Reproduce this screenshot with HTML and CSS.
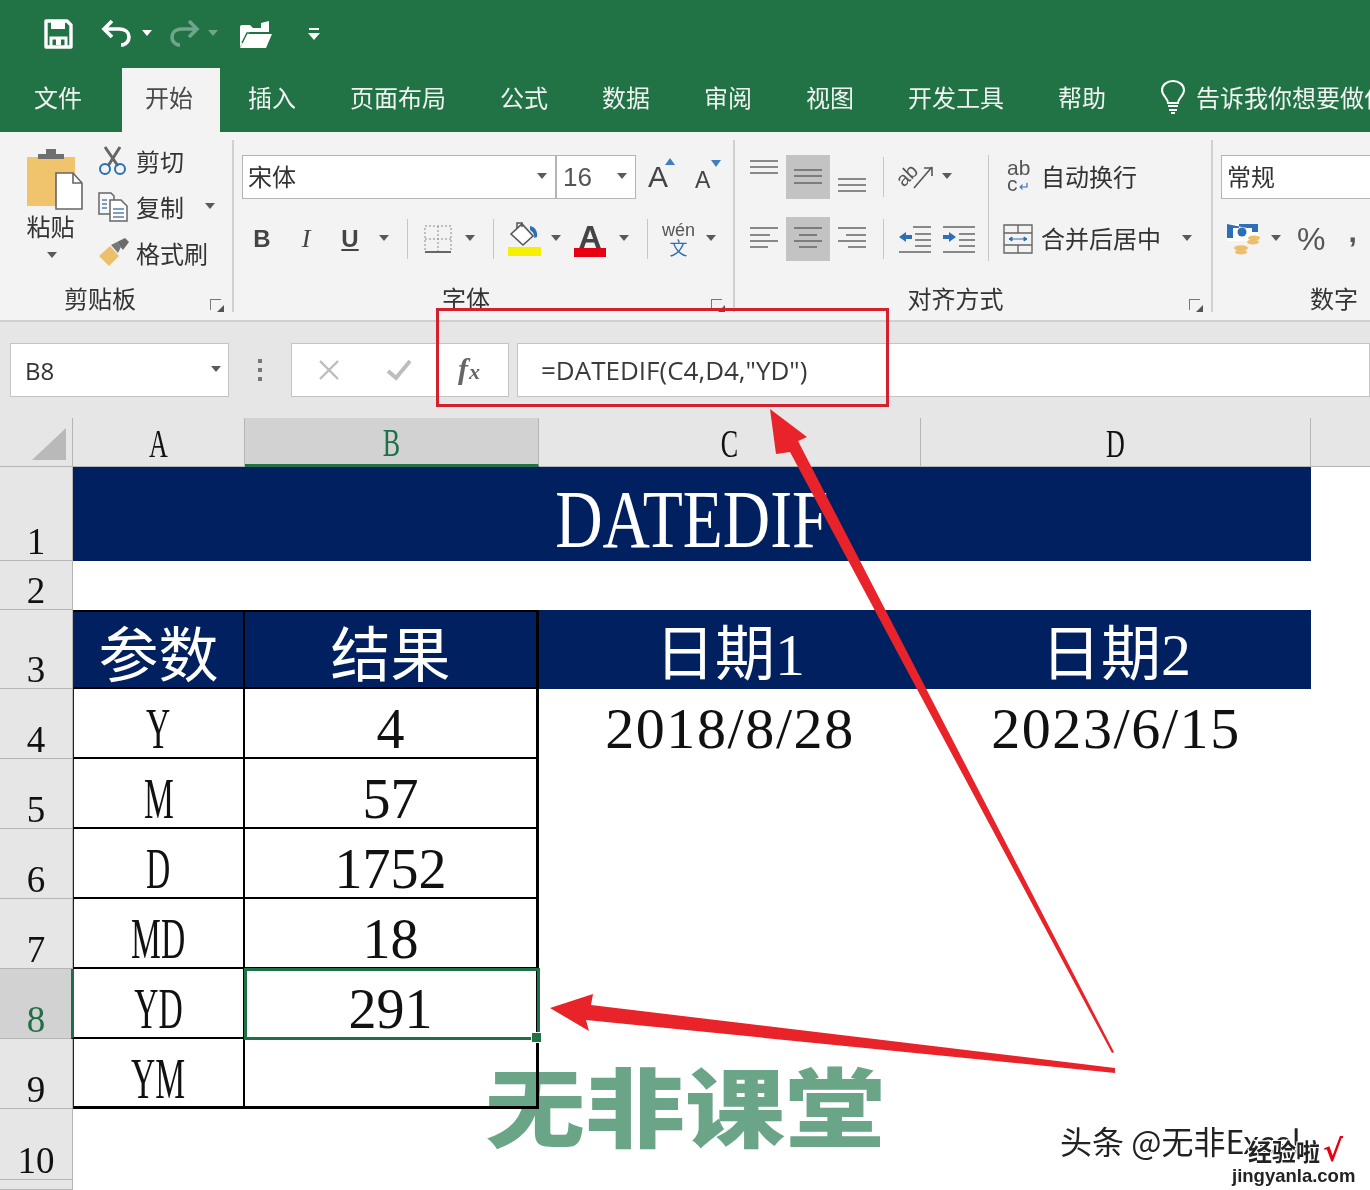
FILE: index.html
```html
<!DOCTYPE html>
<html lang="zh-CN">
<head>
    <meta charset="UTF-8">
    <title>DATEDIF - Excel</title>
    <link rel="stylesheet" href="styles.css">
</head>
<body>
    <div class="qat">
        <svg class="q-save" width="32" height="32" viewBox="0 0 32 32"><path d="M4 3h21l4 4v22H4z" fill="none" stroke="#fff" stroke-width="3.4" stroke-linejoin="round"/><path d="M9 4h14v7H9z" fill="#fff"/><path d="M9 29v-9h15v9" fill="none" stroke="#fff" stroke-width="3"/><path d="M14 21v6h5v-6z" fill="#fff"/></svg>
        <svg class="q-undo" width="32" height="30" viewBox="0 0 32 30"><path d="M11 2 3 10l8 8M4 10h14c7 0 10 4 10 8s-3 8-8 8" fill="none" stroke="#fff" stroke-width="3.6"/></svg>
        <span class="caret white"></span>
        <svg class="q-redo" width="32" height="30" viewBox="0 0 32 30"><path d="M21 2l8 8-8 8M28 10H14C7 10 4 14 4 18s3 8 8 8" fill="none" stroke="#6fa58a" stroke-width="3.6"/></svg>
        <span class="caret dim"></span>
        <svg class="q-open" width="34" height="30" viewBox="0 0 34 30"><path d="M1 28V8q0-2 2-2h8l3 3h8V4l8-2v11H11z" fill="#fff"/><path d="M1 29l7-14h25l-6 14z" fill="#fff"/><path d="M3 24l5-10h23" fill="none" stroke="#217346" stroke-width="1.5"/></svg>
        <svg class="q-more" width="12" height="14" viewBox="0 0 12 14"><path d="M1 1h10v2H1z" fill="#fff"/><path d="M0 6h12l-6 7z" fill="#fff"/></svg>
    </div>

    <div class="tabs">
        <div class="tab first">文件</div>
        <div class="tab active">开始</div>
        <div class="tab">插入</div>
        <div class="tab">页面布局</div>
        <div class="tab">公式</div>
        <div class="tab">数据</div>
        <div class="tab">审阅</div>
        <div class="tab">视图</div>
        <div class="tab">开发工具</div>
        <div class="tab">帮助</div>
        <div class="tell">
            <svg width="26" height="36" viewBox="0 0 26 36"><path d="M8 24c0-5-6-7-6-13C2 6 7 2 13 2s11 4 11 9c0 6-6 8-6 13z" fill="none" stroke="#fff" stroke-width="2"/><path d="M8 27h10M9 31h8M11 34h4" stroke="#fff" stroke-width="2"/></svg>
            <span>告诉我你想要做什么</span>
        </div>
    </div>

    <div class="ribbon">
        <section class="group g-clip">
            <div class="g-body clip-body">
                <div class="paste">
                    <svg width="60" height="62" viewBox="0 0 60 62"><path d="M1 9h48v49H1z" fill="#f0c36d"/><path d="M12 11V6h8V1h10v5h8v5z" fill="#6f6f6f"/><path d="M30 25h17l9 10v26H30z" fill="#fff" stroke="#666" stroke-width="1.6"/><path d="M47 25v10h9" fill="none" stroke="#666" stroke-width="1.6"/></svg>
                    <span class="paste-text">粘贴</span>
                    <span class="caret"></span>
                </div>
                <div class="clip-list">
                    <div class="clip-item">
                        <svg width="30" height="30" viewBox="0 0 30 30"><path d="M7 1l13 19M22 1L10 20" stroke="#666" stroke-width="3"/><circle cx="7" cy="23" r="5" fill="none" stroke="#2b6fb3" stroke-width="2"/><circle cx="22" cy="23" r="5" fill="none" stroke="#2b6fb3" stroke-width="2"/></svg>
                        <span>剪切</span>
                    </div>
                    <div class="clip-item">
                        <svg width="30" height="30" viewBox="0 0 30 30"><path d="M1 1h12l3 3v18H1z" fill="#f7f7f7" stroke="#666" stroke-width="1.5"/><path d="M12 8h11l6 6v15H12z" fill="#fff" stroke="#666" stroke-width="1.5"/><path d="M4 8h5M4 12h5M4 16h5M15 17h11M15 21h11M15 25h11" stroke="#5b7ea6" stroke-width="1.4"/></svg>
                        <span>复制</span>
                        <span class="caret mini"></span>
                    </div>
                    <div class="clip-item brush">
                        <svg width="32" height="30" viewBox="0 0 32 30"><path d="M1 19 12 9l9 10-10 10z" fill="#eebf6b"/><path d="M13 8l6-3 4 5-3 6z" fill="#777"/><path d="M19 5l8-4 4 4-6 8z" fill="#6a6a6a"/></svg>
                        <span>格式刷</span>
                    </div>
                </div>
            </div>
            <div class="g-label">剪贴板</div>
            <span class="launcher"></span>
        </section>

        <section class="group g-font">
            <div class="g-body rows">
                <div class="row">
                    <div class="combo font-name"><span>宋体</span><span class="caret"></span></div>
                    <div class="combo font-size"><span>16</span><span class="caret"></span></div>
                    <div class="size-a big">A<svg width="10" height="7" viewBox="0 0 10 7"><path d="M5 0l5 7H0z" fill="#3f7fc1"/></svg></div>
                    <div class="size-a small">A<svg width="10" height="7" viewBox="0 0 10 7"><path d="M5 7 0 0h10z" fill="#3f7fc1"/></svg></div>
                </div>
                <div class="row tools-row">
                    <div class="tool b44 t-bold">B</div>
                    <div class="tool b44 t-ital">I</div>
                    <div class="tool b44 t-under"><u>U</u></div>
                    <span class="caret"></span>
                    <i class="sep"></i>
                    <div class="tool b40">
                        <svg width="28" height="28" viewBox="0 0 28 28"><path d="M1 1h26v26H1z" fill="none" stroke="#8a8a8a" stroke-dasharray="2 2"/><path d="M14 1v26M1 14h26" stroke="#8a8a8a" stroke-dasharray="2 2"/><path d="M1 27h26" stroke="#666" stroke-width="2"/></svg>
                    </div>
                    <span class="caret"></span>
                    <i class="sep"></i>
                    <div class="tool b40">
                        <svg width="36" height="36" viewBox="0 0 36 36"><path d="M5 13 16 3l11 12-10 9z" fill="#fff" stroke="#555" stroke-width="1.6"/><path d="M11 8V2h5v4" fill="none" stroke="#555" stroke-width="1.5"/><path d="M24 5c5 1 8 5 7 11l-3 1c1-3-1-6-4-8z" fill="#2f6fb5"/><path d="M2 26h33v9H2z" fill="#f5ef00"/></svg>
                    </div>
                    <span class="caret"></span>
                    <div class="tool b44 color-a"><span>A</span><b></b></div>
                    <span class="caret"></span>
                    <i class="sep"></i>
                    <div class="tool b41 wen"><span>wén</span><em>文</em></div>
                    <span class="caret"></span>
                </div>
            </div>
            <div class="g-label">字体</div>
            <span class="launcher"></span>
        </section>

        <section class="group g-align">
            <div class="g-body align-body">
                <div class="a-col">
                    <div class="row">
                        <div class="tool b44"><svg width="44" height="44" viewBox="0 0 44 44"><path d="M8 6h28M8 12h28M8 18h28" stroke="#666" stroke-width="1.4"/></svg></div>
                        <div class="tool b44 on"><svg width="44" height="44" viewBox="0 0 44 44"><path d="M8 15h28M8 21h28M8 28h28" stroke="#666" stroke-width="1.4"/></svg></div>
                        <div class="tool b44"><svg width="44" height="44" viewBox="0 0 44 44"><path d="M8 24h28M8 30h28M8 36h28" stroke="#666" stroke-width="1.4"/></svg></div>
                    </div>
                    <div class="row">
                        <div class="tool b44"><svg width="44" height="44" viewBox="0 0 44 44"><path d="M8 11h28M8 18h20M8 24h28M8 30h18" stroke="#666" stroke-width="1.4"/></svg></div>
                        <div class="tool b44 on"><svg width="44" height="44" viewBox="0 0 44 44"><path d="M8 11h28M13 18h18M8 24h28M13 30h18" stroke="#666" stroke-width="1.4"/></svg></div>
                        <div class="tool b44"><svg width="44" height="44" viewBox="0 0 44 44"><path d="M8 11h28M16 18h20M8 24h28M18 30h18" stroke="#666" stroke-width="1.4"/></svg></div>
                    </div>
                </div>
                <div class="a-col mid">
                    <div class="row">
                        <i class="sep"></i>
                        <div class="orient"><span>ab</span><svg width="22" height="24" viewBox="0 0 22 24"><path d="M2 23 20 2" stroke="#555" stroke-width="1.6"/><path d="M12 3h8v8" fill="none" stroke="#555" stroke-width="1.6"/></svg></div>
                        <span class="caret"></span>
                    </div>
                    <div class="row">
                        <i class="sep"></i>
                        <svg class="indent" width="34" height="28" viewBox="0 0 34 28"><path d="M15 2h18M17 9h16M17 15h16M17 21h16M1 27h32" stroke="#666" stroke-width="1.4"/><path d="M1 12l7-5v3h6v4H8v3z" fill="#2f6fb5"/></svg>
                        <svg class="indent" width="34" height="28" viewBox="0 0 34 28"><path d="M1 2h32M17 9h16M17 15h16M17 21h16M1 27h32" stroke="#666" stroke-width="1.4"/><path d="M14 12 7 7v3H1v4h6v3z" fill="#2f6fb5"/></svg>
                    </div>
                </div>
                <div class="a-col last">
                    <div class="row">
                        <div class="wrap-ic"><span>ab</span><span>c<em>↵</em></span></div>
                        <span class="a-text wrap-text">自动换行</span>
                    </div>
                    <div class="row">
                        <svg class="merge-ic" width="30" height="30" viewBox="0 0 30 30"><path d="M1 1h28v28H1zM1 9h28M1 21h28M15 1v8M15 21v8" fill="none" stroke="#666" stroke-width="1.4"/><path d="M6 15h18M6 15l3-2v4zM24 15l-3-2v4z" fill="#2f6fb5" stroke="#2f6fb5"/></svg>
                        <span class="a-text">合并后居中</span>
                        <span class="caret merge-caret"></span>
                    </div>
                </div>
            </div>
            <div class="g-label">对齐方式</div>
            <span class="launcher"></span>
        </section>

        <section class="group g-num">
            <div class="g-body rows">
                <div class="row">
                    <div class="combo num-fmt"><span>常规</span></div>
                </div>
                <div class="row">
                    <svg class="money" width="34" height="32" viewBox="0 0 34 32"><path d="M1 1h31v17H1z" fill="#fff"/><path d="M1 1h31v4h-6l-5 0M1 1v14l6 0V5h6V1zM26 1h6v8h-6z" fill="#2f6fb5"/><circle cx="16" cy="9" r="4.5" fill="#2f6fb5"/><ellipse cx="28" cy="15" rx="6" ry="2.4" fill="#eebf6b"/><ellipse cx="27" cy="19" rx="6" ry="2.4" fill="#eebf6b"/><ellipse cx="15" cy="25" rx="7" ry="2.8" fill="#eebf6b"/><ellipse cx="15" cy="29" rx="6" ry="2.4" fill="#eebf6b"/></svg>
                    <span class="caret"></span>
                    <span class="pct">%</span>
                    <span class="comma">,</span>
                </div>
            </div>
            <div class="g-label">数字</div>
        </section>
    </div>

    <div class="fbar">
        <div class="namebox"><span>B8</span><span class="caret"></span></div>
        <svg class="dots" width="4" height="22" viewBox="0 0 4 22"><path d="M0 0h4v4H0zM0 9h4v4H0zM0 18h4v4H0z" fill="#777"/></svg>
        <div class="fbtns">
            <svg class="f-x" width="22" height="22" viewBox="0 0 22 22"><path d="M2 2l18 18M20 2 2 20" stroke="#bdbdbd" stroke-width="2.4"/></svg>
            <svg class="f-ok" width="26" height="22" viewBox="0 0 26 22"><path d="M2 12l8 7L24 2" fill="none" stroke="#bdbdbd" stroke-width="4"/></svg>
            <div class="fx"><i>f</i><i class="x">x</i></div>
        </div>
        <div class="formula">=DATEDIF(C4,D4,"YD")</div>
    </div>

    <div class="sheet">
        <div class="ch corner"><svg width="34" height="32" viewBox="0 0 34 32"><path d="M34 0v32H0z" fill="#b9b9b9"/></svg></div>
        <div class="ch"><span class="nar">A</span></div>
        <div class="ch sel"><span class="nar">B</span></div>
        <div class="ch"><span class="nar">C</span></div>
        <div class="ch"><span class="nar">D</span></div>
        <div class="ch rest"></div>

        <div class="rh">1</div>
        <div class="title"><span>DATEDIF</span></div>
        <div></div>

        <div class="rh">2</div>
        <div></div><div></div><div></div><div></div><div></div>

        <div class="rh">3</div>
        <div class="hd tb">参数</div>
        <div class="hd tb tr">结果</div>
        <div class="hd">日期1</div>
        <div class="hd">日期2</div>
        <div></div>

        <div class="rh">4</div>
        <div class="c tb"><span class="nar">Y</span></div>
        <div class="c tb tr">4</div>
        <div class="c date">2018/8/28</div>
        <div class="c date">2023/6/15</div>
        <div></div>

        <div class="rh">5</div>
        <div class="c tb"><span class="nar">M</span></div>
        <div class="c tb tr">57</div>
        <div></div><div></div><div></div>

        <div class="rh">6</div>
        <div class="c tb"><span class="nar">D</span></div>
        <div class="c tb tr">1752</div>
        <div></div><div></div><div></div>

        <div class="rh">7</div>
        <div class="c tb"><span class="nar">MD</span></div>
        <div class="c tb tr">18</div>
        <div></div><div></div><div></div>

        <div class="rh sel">8</div>
        <div class="c tb sel-a"><span class="nar">YD</span></div>
        <div class="c tb tr active-cell">291<b class="handle"></b></div>
        <div></div><div></div><div></div>

        <div class="rh">9</div>
        <div class="c tb end"><span class="nar">YM</span></div>
        <div class="c tb tr end"></div>
        <div></div><div></div><div></div>

        <div class="rh">10</div>
        <div></div><div></div><div></div><div></div><div></div>

        <div class="rh"></div>
    </div>

    <div class="redbox"></div>
    <svg class="arrows" width="1370" height="1190" viewBox="0 0 1370 1190">
        <path d="M770 409 807 437 798 441 1114 1052 1112 1053 790 452 776 454z" fill="#e8232a"/>
        <path d="M550 1008 593 994 591 1005 1115 1068 1115 1073 586 1020 589 1031z" fill="#e8232a"/>
    </svg>
    <div class="mark">无非课堂</div>
    <div class="byline">头条 @无非Excel</div>
    <div class="stamp"><div>经验啦<em>√</em></div><div class="url">jingyanla.com</div></div>
</body>
</html>
```
FILE: styles.css
```css
body {
    margin: 0;
    width: 1370px;
    height: 1190px;
    overflow: hidden;
    position: relative;
    background: #fff;
    color: #333;
    font-family: "Noto Sans CJK SC", "Liberation Sans", sans-serif;
    font-size: 24px;
}

svg {
    display: block;
    flex: none;
}

.caret {
    flex: none;
    width: 24px;
    height: 8px;
    display: flex;
    justify-content: center;
}

.caret::after {
    content: "";
    border-left: 5px solid transparent;
    border-right: 5px solid transparent;
    border-top: 6px solid #5a5a5a;
}

.caret.white::after { border-top-color: #fff; }
.caret.dim::after { border-top-color: #6fa58a; }

/* title row */
.qat {
    height: 68px;
    background: #217346;
    display: flex;
    align-items: center;
    box-sizing: border-box;
    padding-left: 42px;
}

.q-undo { margin-left: 27px; }
.q-undo + .caret { margin-left: 2px; }
.q-redo { margin-left: 9px; }
.q-redo + .caret { margin-left: 1px; }
.q-open { margin-left: 14px; }
.q-more { margin-left: 35px; }

.tabs {
    height: 64px;
    background: #217346;
    color: #f2f2f2;
    display: flex;
    white-space: nowrap;
    overflow: hidden;
}

.tab {
    padding: 0 27px;
    line-height: 58px;
}

.tab.first {
    padding-left: 34px;
    margin-right: 13px;
}

.tab.active {
    background: #f3f3f3;
    color: #4a4a4a;
    padding-left: 23px;
    margin-right: 1px;
}

.tell {
    display: flex;
    align-items: center;
    gap: 10px;
    margin-left: 27px;
    padding-bottom: 7px;
}

/* ribbon */
.ribbon {
    height: 188px;
    box-sizing: border-box;
    padding-top: 8px;
    background: #f3f3f3;
    display: flex;
    overflow: hidden;
}

.group {
    flex: none;
    height: 172px;
    position: relative;
    box-sizing: border-box;
    border-right: 2px solid #d0d0d0;
    display: flex;
    flex-direction: column;
}

.g-clip { width: 234px; }
.g-font { width: 501px; padding-left: 8px; }
.g-align { width: 478px; padding-left: 7px; }
.g-num { width: 157px; border-right: 0; padding-left: 8px; }

.g-body {
    height: 135px;
    flex: none;
}

.g-label {
    line-height: 28px;
    margin-top: 9px;
    text-align: center;
    white-space: nowrap;
}

.g-clip .g-label { padding-right: 32px; }
.g-font .g-label { padding-right: 43px; }
.g-align .g-label { padding-right: 42px; }
.g-num .g-label { text-align: left; padding-left: 89px; }

.launcher {
    position: absolute;
    right: 11px;
    bottom: 2px;
    width: 10px;
    height: 10px;
    border-left: 1.5px solid #777;
    border-top: 1.5px solid #777;
}

.launcher::after {
    content: "";
    position: absolute;
    right: -3px;
    bottom: -2px;
    border-left: 7px solid transparent;
    border-bottom: 7px solid #555;
}

.clip-body {
    display: flex;
}

.paste {
    width: 98px;
    display: flex;
    flex-direction: column;
    align-items: center;
    padding: 8px 0 0 9px;
    box-sizing: border-box;
}

.paste svg { margin-left: 4px; }

.paste-text {
    margin: 0 4px 0 0;
    line-height: 32px;
    width: 50px;
}

.paste .caret { margin-top: 10px; margin-right: 4px; }

.clip-list {
    display: flex;
    flex-direction: column;
    margin-top: -2px;
}

.clip-item {
    height: 46px;
    display: flex;
    align-items: center;
    gap: 8px;
    white-space: nowrap;
}

.clip-item.brush { gap: 6px; }
.clip-item .mini { margin-left: 6px; }

.rows {
    display: flex;
    flex-direction: column;
    padding-top: 15px;
    gap: 18px;
    box-sizing: border-box;
}

.row {
    height: 44px;
    display: flex;
    align-items: center;
    white-space: nowrap;
}

.tools-row { margin-left: -2px; }

.combo {
    height: 44px;
    box-sizing: border-box;
    background: #fff;
    border: 1px solid #b4b4b4;
    display: flex;
    align-items: center;
    justify-content: space-between;
    padding-left: 5px;
}

.font-name { width: 314px; }
.font-name span:first-child, .num-fmt span { margin-bottom: 4px; }
.font-size { width: 80px; font-family: "Liberation Sans", sans-serif; font-size: 26px; color: #555; padding-left: 6px; }
.font-name .caret { margin-right: 1px; }
.font-size .caret { margin-right: 1px; }

.size-a {
    font-family: "Liberation Sans", sans-serif;
    color: #444;
    display: flex;
    align-items: flex-start;
}

.size-a.big { font-size: 30px; margin-left: 12px; width: 40px; }
.size-a.small { font-size: 23px; margin-left: 7px; padding-top: 6px; }
.size-a svg { margin-top: -2px; margin-left: -3px; }
.size-a.small svg { margin-top: -7px; margin-left: 1px; }

.tool {
    height: 44px;
    display: flex;
    align-items: center;
    justify-content: center;
    flex: none;
    font-family: "Liberation Sans", sans-serif;
    color: #444;
}

.b44 { width: 44px; }
.b40 { width: 40px; }
.b41 { width: 41px; }

.t-bold { font-weight: 700; }
.t-ital { font-family: "Liberation Serif", serif; font-style: italic; font-size: 26px; }
.t-under { font-weight: 700; }

.sep {
    flex: none;
    width: 1px;
    height: 40px;
    margin: 0 10px 0 11px;
    background: #c6c6c6;
}

.color-a {
    flex-direction: column;
    font-size: 32px;
    line-height: 30px;
    font-weight: 700;
}

.color-a b {
    width: 32px;
    height: 9px;
    background: #e60012;
    margin-top: -4px;
}

.wen {
    flex-direction: column;
    font-size: 18px;
    line-height: 17px;
    color: #555;
}

.wen em {
    font-style: normal;
    color: #2f6fb5;
    font-family: "Noto Sans CJK SC", sans-serif;
}

.on { background: #c3c3c3; }

.align-body {
    display: flex;
    padding-top: 15px;
    box-sizing: border-box;
}

.a-col {
    display: flex;
    flex-direction: column;
    gap: 18px;
}

.a-col.mid { width: 114px; }
.a-col.mid .sep { margin: 0 14px 0 9px; }

.a-col.last {
    width: 215px;
    border-left: 1px solid #c6c6c6;
    height: 106px;
}

.orient {
    display: flex;
    align-items: center;
    width: 40px;
    font-family: "Liberation Sans", sans-serif;
    color: #555;
}

.orient span {
    font-size: 20px;
    transform: rotate(-45deg) translateY(-3px);
    margin-right: -8px;
}

.orient + .caret { margin-left: -3px; }

.indent + .indent { margin-left: 10px; }

.wrap-ic {
    width: 28px;
    margin-left: 18px;
    font-family: "Liberation Sans", sans-serif;
    font-size: 21px;
    line-height: 16px;
    color: #555;
}

.wrap-ic span { display: block; }
.wrap-ic em { font-size: 13px; font-style: normal; color: #2f6fb5; margin-left: 1px; }

.a-text { margin: 0 0 4px 8px; }
.a-text.wrap-text { margin-left: 6px; }
.merge-ic { margin-left: 14px; }
.merge-caret { margin-left: 14px; }

.num-fmt { width: 170px; flex: none; }
.g-num .row { padding-left: 5px; }
.g-num .row:first-child { padding-left: 0; }
.g-num .caret { margin-left: 4px; }

.pct {
    margin-left: 9px;
    font-family: "Liberation Sans", sans-serif;
    font-size: 32px;
    color: #555;
}

.comma {
    margin: 0 0 14px 23px;
    font-family: "Liberation Sans", sans-serif;
    font-weight: 700;
    font-size: 30px;
    color: #555;
    line-height: 30px;
}

/* formula bar */
.fbar {
    height: 98px;
    box-sizing: border-box;
    background: #e6e6e6;
    border-top: 2px solid #cfcfcf;
    padding: 21px 0 21px 10px;
    display: flex;
}

.namebox, .fbtns, .formula {
    box-sizing: border-box;
    background: #fff;
    border: 1px solid #c4c4c4;
    display: flex;
    align-items: center;
    font-family: "Open Sans", sans-serif;
}

.namebox {
    width: 219px;
    justify-content: space-between;
    padding-left: 14px;
}

.dots {
    align-self: center;
    margin: 0 29px 0 29px;
}

.fbtns {
    width: 218px;
}

.f-x { margin-left: 26px; }
.f-ok { margin-left: 46px; }

.fx {
    margin-left: 46px;
    font-family: "Liberation Serif", serif;
    font-weight: 700;
    color: #666;
    font-size: 30px;
    line-height: 28px;
}

.fx .x { font-size: 22px; margin-left: 1px; }

.formula {
    flex: 1;
    margin-left: 8px;
    padding-left: 23px;
    font-size: 26px;
    color: #3a3a3a;
}

/* sheet */
.sheet {
    display: grid;
    grid-template-columns: 73px 172px 294px 382px 390px 1fr;
    grid-template-rows: 49px 94px 49px 79px repeat(6, 70px) 71px 10px;
    background: #fff;
    font-family: "Liberation Serif", "Noto Sans CJK SC", serif;
    color: #111;
}

.ch {
    background: #e6e6e6;
    border-right: 1px solid #b5b5b5;
    border-bottom: 1px solid #b5b5b5;
    display: flex;
    justify-content: center;
    align-items: center;
    font-size: 40px;
    line-height: 40px;
    padding-top: 4px;
    box-sizing: border-box;
}

.ch.rest { border-right: 0; }
.ch.corner { justify-content: flex-end; padding: 0 6px 6px 0; align-items: flex-end; }
.ch.sel { background: #d2d2d2; color: #1f6f47; border-bottom: 3px solid #217346; }

.nar {
    display: inline-block;
    transform: scaleX(.65);
    white-space: nowrap;
}

.rh {
    background: #e6e6e6;
    border-right: 1px solid #b5b5b5;
    border-bottom: 1px solid #b5b5b5;
    box-sizing: border-box;
    font-size: 37px;
    line-height: 37px;
    display: flex;
    align-items: flex-end;
    justify-content: center;
}

.rh.sel { background: #d2d2d2; color: #1f6f47; }

.title {
    grid-column: span 4;
    background: #002060;
    color: #fff;
    display: flex;
    justify-content: center;
    align-items: center;
    font-size: 82px;
    padding-top: 12px;
    box-sizing: border-box;
}

.title span {
    display: inline-block;
    transform: scaleX(.8);
}

.hd {
    background: #002060;
    color: #fff;
    font-size: 60px;
    line-height: 90px;
    text-align: center;
    box-sizing: border-box;
}

.c {
    font-size: 56px;
    line-height: 80px;
    text-align: center;
    box-sizing: border-box;
    position: relative;
}

.c .nar { transform: scaleX(.6); }

.date {
    font-size: 58px;
    letter-spacing: 1.6px;
}

.tb {
    border-right: 2px solid #000;
    border-bottom: 2px solid #000;
    border-left: 1px solid #222;
}

.hd.tb {
    border-top: 2px solid #000;
}

.tr {
    border-right: 3px solid #000;
    border-left: 0;
}

.end { border-bottom-width: 3px; }

.active-cell {
    outline: 3px solid #1f6f47;
    outline-offset: -2px;
    z-index: 2;
}

.sel-a {
    border-left: 3px solid #1f6f47;
    margin-left: -2px;
}

.handle {
    position: absolute;
    right: -6px;
    bottom: -6px;
    width: 9px;
    height: 9px;
    background: #217346;
    border: 1px solid #fff;
}

/* things lying over the picture */
.redbox {
    position: absolute;
    left: 436px;
    top: 308px;
    width: 453px;
    height: 99px;
    box-sizing: border-box;
    border: 3px solid #d3202e;
}

.arrows {
    position: absolute;
    left: 0;
    top: 0;
}

.mark {
    position: absolute;
    left: 485px;
    top: 1052px;
    font-size: 100px;
    line-height: 120px;
    font-weight: 900;
    color: #6ba588;
    mix-blend-mode: multiply;
    transform: scaleY(.86);
    transform-origin: top;
}

.byline {
    position: absolute;
    left: 1060px;
    top: 1118px;
    font-size: 32px;
    line-height: 44px;
    color: #222;
    white-space: nowrap;
}

.stamp {
    position: absolute;
    left: 1232px;
    top: 1134px;
    width: 130px;
    font-weight: 700;
    color: #222;
    text-shadow: -1px -1px 0 #fff, 1px -1px 0 #fff, -1px 1px 0 #fff, 1px 1px 0 #fff;
}

.stamp div:first-child {
    padding-left: 16px;
    line-height: 34px;
    white-space: nowrap;
}

.stamp em {
    color: #e60012;
    font-family: "DejaVu Sans", sans-serif;
    font-size: 30px;
    font-style: normal;
    margin-left: 3px;
}

.url {
    font-family: "Liberation Sans", sans-serif;
    font-size: 18.5px;
    line-height: 16px;
}
```
